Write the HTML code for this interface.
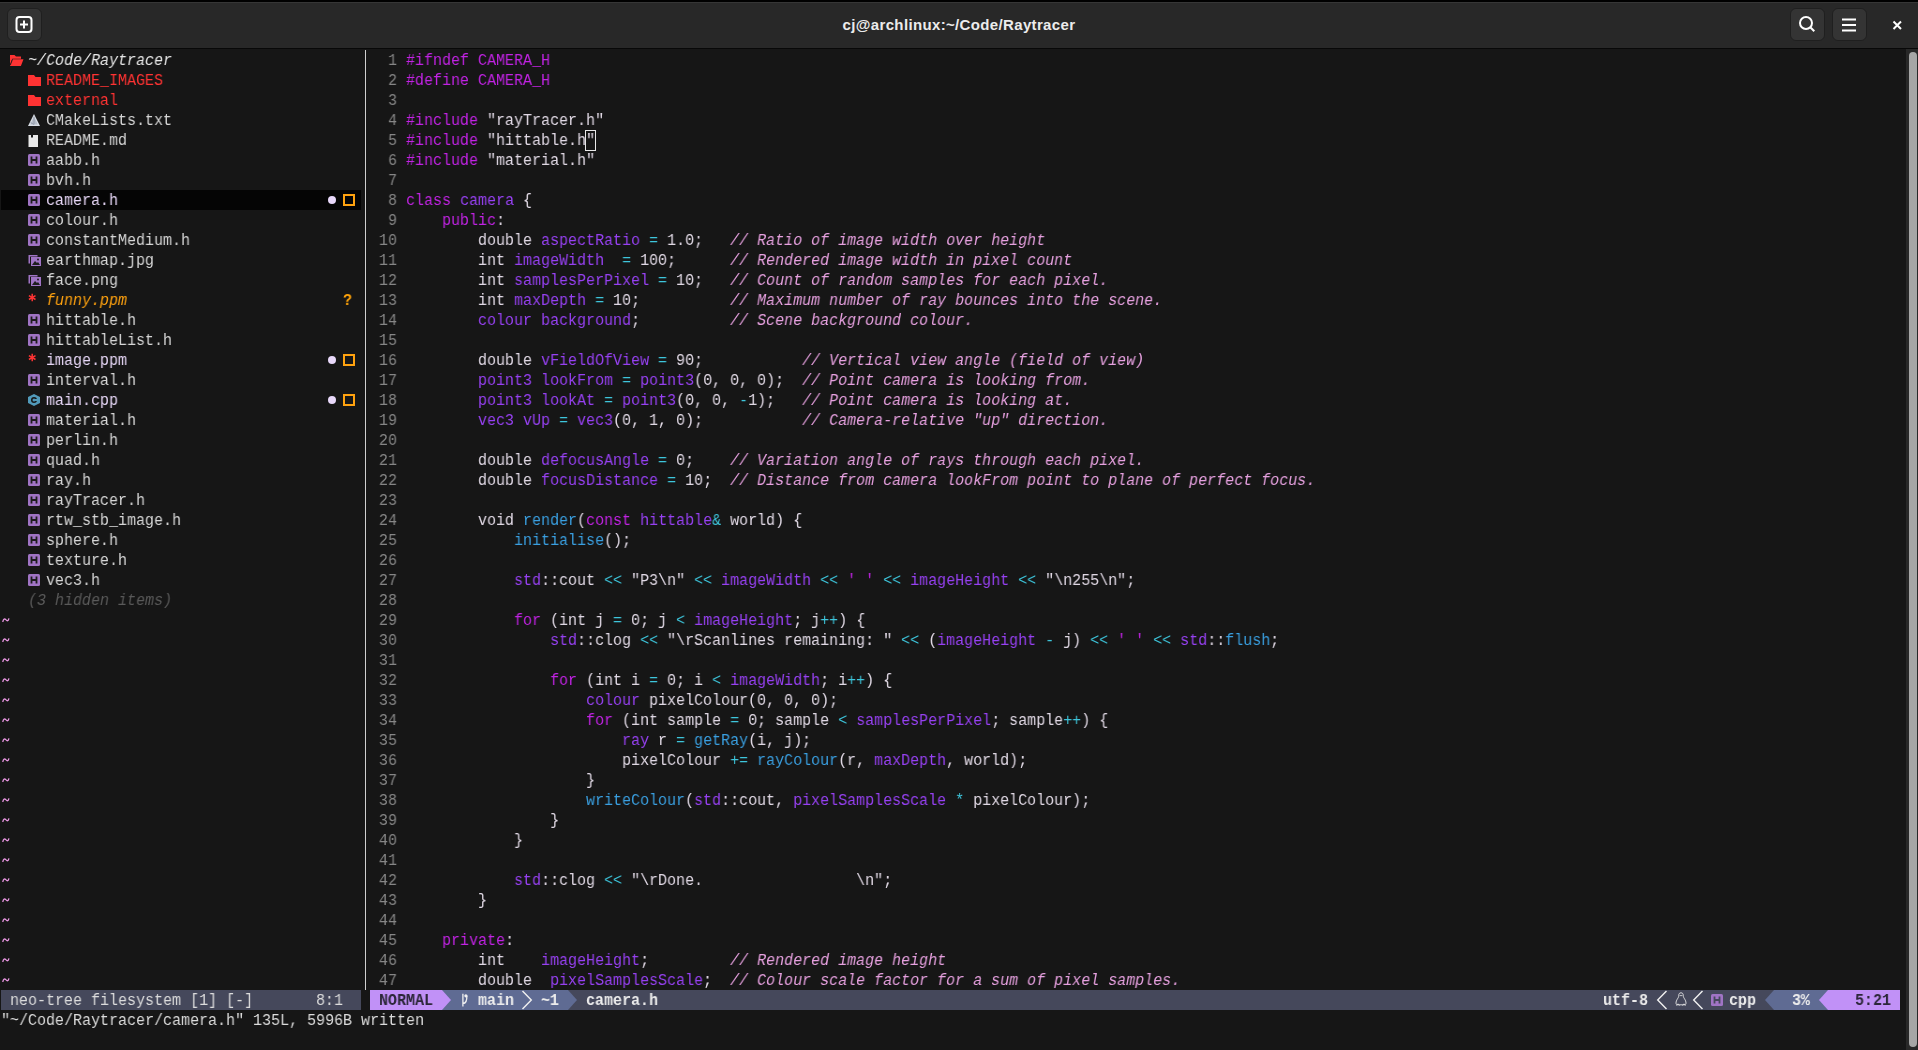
<!DOCTYPE html>
<html><head><meta charset="utf-8"><style>
*{margin:0;padding:0;box-sizing:border-box}
html,body{width:1918px;height:1050px;overflow:hidden;background:#161616}
body{position:relative;font-family:"Liberation Mono",monospace;font-size:16px;line-height:20px}
.t{position:absolute;white-space:pre;height:20px;transform:scaleX(0.9375);transform-origin:0 0;margin-top:1px;will-change:transform;color:#e0d8e4}
.ic{position:absolute;overflow:visible}
.bar{position:absolute;height:20px}
.ln{color:#868686}
.k{color:#c223e4} .i{color:#9741f2} .f{color:#3a9fe0} .o{color:#3ec6dc}
.c{color:#e7a1e0;font-style:italic} .s{color:#c223e4}
.root{color:#e8e8e8;font-style:italic}
.red{color:#ff3333} .tr{color:#d6d6d6} .trl{color:#e6d6f6}
.orgi{color:#ffa20f;font-style:italic} .hid{color:#5a5a5a;font-style:italic}
.tl{color:#e06bd0} .cmd{color:#dcdcdc}
.sl{color:#dcdcdc} .sn{color:#2b2638;font-weight:bold} .sw{color:#ececec;font-weight:bold} .b{font-weight:bold}
.dot{position:absolute;width:8px;height:8px;border-radius:50%;background:#e8d8fa}
.box{position:absolute;width:12px;height:12px;border:2px solid #ffa20f}
#hdr{position:absolute;left:0;top:0;width:1918px;height:49px;background:#282828;border-top:2px solid #000;border-bottom:1px solid #080808;box-shadow:inset 0 1px 0 #363636}
#hdr .title{position:absolute;left:0;width:1918px;top:13px;text-align:center;font:bold 15px/20px "Liberation Sans",sans-serif;letter-spacing:0.35px;color:#ececec}
.hb{position:absolute;top:6px;width:35px;height:33px;border-radius:6px;background:#343434;border:1px solid #1f1f1f}
#sep{position:absolute;left:365px;top:50px;width:1px;height:940px;background:#cfcfcf}
#selrow{position:absolute;left:1px;top:190px;width:360px;height:20px;background:#050505}
#cursor{position:absolute;left:585px;top:130px;width:11px;height:21px;border:1.5px solid #e8e8e8}
#sb{position:absolute;left:1906px;top:49px;width:12px;height:1001px;background:#282828}
#sbt{position:absolute;left:1909px;top:52px;width:8px;height:995px;border-radius:4px;background:#a6a6a6}
</style></head><body>
<div id="hdr">
<div class="hb" style="left:7px"><svg width="34" height="32" viewBox="0 0 34 32" style="position:absolute;left:-1px;top:-1px"><rect x="9.5" y="9" width="15" height="15" rx="3" fill="none" stroke="#fff" stroke-width="2"/><path d="M17 12.5v8M13 16.5h8" stroke="#fff" stroke-width="2"/></svg></div>
<div class="title">cj@archlinux:~/Code/Raytracer</div>
<div class="hb" style="left:1790px"><svg width="34" height="32" viewBox="0 0 34 32" style="position:absolute;left:-1px;top:-1px"><circle cx="16" cy="15" r="6" fill="none" stroke="#fff" stroke-width="2"/><path d="M20.3 19.3l4 4" stroke="#fff" stroke-width="2"/></svg></div>
<div class="hb" style="left:1832px"><svg width="34" height="32" viewBox="0 0 34 32" style="position:absolute;left:-1px;top:-1px"><path d="M10 11.5h14M10 17h14M10 22.5h14" stroke="#fff" stroke-width="2"/></svg></div>
<svg width="14" height="14" viewBox="0 0 14 14" style="position:absolute;left:1890px;top:16px"><path d="M3.5 3.5l7.5 7.5M11 3.5l-7.5 7.5" stroke="#fff" stroke-width="2"/></svg>
</div>
<div id="selrow"></div>
<div id="sep"></div>
<div id="sb"></div><div id="sbt"></div>
<div class="bar" style="left:1px;top:990px;width:360px;background:#45485b"></div>
<div class="t sl" style="left:10px;top:990px">neo-tree filesystem [1] [-]</div>
<div class="t sl" style="left:316px;top:990px">8:1</div>
<div class="bar" style="left:370px;top:990px;width:1530px;background:#45485b"></div>
<div class="bar" style="left:370px;top:990px;width:72px;background:#c191f7"></div>
<svg class="ic" style="left:442px;top:990px" width="9" height="20"><path d="M0 0h0l9 10l-9 10z" fill="#c191f7"/></svg>
<div class="bar" style="left:442px;top:990px;width:126px;background:#5f6b93"></div>
<svg class="ic" style="left:442px;top:990px" width="9" height="20"><path d="M0 0l9 10l-9 10z" fill="#c191f7"/></svg>
<svg class="ic" style="left:568px;top:990px" width="9" height="20"><path d="M0 0l9 10l-9 10z" fill="#5f6b93"/></svg>
<div class="t sn" style="left:379px;top:990px">NORMAL</div>
<svg class="ic" style="left:460px;top:990px" width="9" height="20" viewBox="0 0 9 20"><path d="M2.9 3.7v12.8M2.9 13.5c3 0 4-2.5 4-7.7" fill="none" stroke="#f0f0f0" stroke-width="1.3"/><circle cx="5.9" cy="5.8" r="1.6" fill="#f0f0f0"/></svg>
<div class="t sw" style="left:478px;top:990px">main</div>
<svg class="ic" style="left:523px;top:990px" width="10" height="20"><path d="M-0.5 1l8.8 9l-8.8 9" fill="none" stroke="#f0f0f0" stroke-width="1.4"/></svg>
<div class="t sw" style="left:541px;top:990px">~1</div>
<div class="t sw b" style="left:586px;top:990px">camera.h</div>
<div class="t sw" style="left:1603px;top:990px">utf-8</div>
<svg class="ic" style="left:1657px;top:990px" width="10" height="20"><path d="M9.5 1l-8.8 9l8.8 9" fill="none" stroke="#f0f0f0" stroke-width="1.4"/></svg>
<svg class="ic" style="left:1693px;top:990px" width="10" height="20"><path d="M9.5 1l-8.8 9l8.8 9" fill="none" stroke="#f0f0f0" stroke-width="1.4"/></svg>
<svg class="ic" style="left:1675px;top:990px" width="12" height="20" viewBox="0 0 12 20"><path d="M6 2.8c-1.6 0-2.3 1.2-2.3 2.8c0 1.2-.3 1.8-1.2 3.2C1.6 10.2 1 11.6 1 13.2c0 .8.3 1.3.8 1.6h8.4c.5-.3.8-.8.8-1.6c0-1.6-.6-3-1.5-4.4C8.6 7.4 8.3 6.800 8.300 5.600C8.300 4 7.600 2.800 6 2.800z" fill="none" stroke="#e6e6e6" stroke-width="0.9"/><path d="M4.600 5.600h2.800M1.500 15.600l1.500-1.800l1.500 1.800M7.500 15.600l1.500-1.800l1.500 1.800" fill="none" stroke="#e6e6e6" stroke-width="0.8"/></svg>
<svg class="ic" style="left:1711px;top:990px" width="12" height="20" viewBox="0 0 12 20"><rect x="0" y="4" width="12" height="12" rx="1.5" fill="#a074c4"/><path d="M3.5 6.5v7M8.5 6.5v7M3.5 10h5" stroke="#45485b" stroke-width="1.8"/></svg>
<div class="t sw" style="left:1729px;top:990px">cpp</div>
<div class="bar" style="left:1774px;top:990px;width:126px;background:#5f6b93"></div>
<svg class="ic" style="left:1765px;top:990px" width="9" height="20"><path d="M9 0L0 10l9 10z" fill="#5f6b93"/></svg>
<div class="bar" style="left:1828px;top:990px;width:72px;background:#c191f7"></div>
<svg class="ic" style="left:1819px;top:990px" width="9" height="20"><path d="M9 0L0 10l9 10z" fill="#c191f7"/></svg>
<div class="t sw" style="left:1792px;top:990px">3%</div>
<div class="t sn" style="left:1855px;top:990px">5:21</div>
<svg class="ic" style="left:10px;top:55px" width="14" height="12" viewBox="0 0 14 12"><path d="M0 0h4.5l1.5 1.5h5v2.3H2.3L0 9.5z" fill="#ff3333"/><path d="M2.6 4.3h10.9l-2.6 6.7H0z" fill="#ff3333"/><path d="M2.4 4.6L0.4 10" stroke="#1a1a1a" stroke-width="0.7"/></svg>
<svg class="ic" style="left:28px;top:70px" width="14" height="20" viewBox="0 0 14 20"><path d="M0 5h6l1.5 2H13v9H0z" fill="#ff3333"/></svg>
<svg class="ic" style="left:28px;top:90px" width="14" height="20" viewBox="0 0 14 20"><path d="M0 5h6l1.5 2H13v9H0z" fill="#ff3333"/></svg>
<svg class="ic" style="left:28px;top:110px" width="12" height="20" viewBox="0 0 12 20"><path d="M6 4L0 16h12z" fill="#d9dee6"/><path d="M6 6.5L2.2 14.5h7.6z" fill="#b5bcc8"/><path d="M6 6.5v8M6 14.5l-3.5-2" stroke="#8d96a3" stroke-width="0.8"/></svg>
<svg class="ic" style="left:28px;top:130px" width="12" height="20" viewBox="0 0 12 20"><path d="M0.5 5h9.5v12H0.5z" fill="#e8e8e8"/><path d="M3 5v3l1-1l1 1V5z" fill="#161616"/></svg>
<svg class="ic" style="left:28px;top:150px" width="12" height="20" viewBox="0 0 12 20"><rect x="0" y="4" width="12" height="12" rx="1.5" fill="#a074c4"/><path d="M3.5 6.5v7M8.5 6.5v7M3.5 10h5" stroke="#1d1d1d" stroke-width="1.8"/></svg>
<svg class="ic" style="left:28px;top:170px" width="12" height="20" viewBox="0 0 12 20"><rect x="0" y="4" width="12" height="12" rx="1.5" fill="#a074c4"/><path d="M3.5 6.5v7M8.5 6.5v7M3.5 10h5" stroke="#1d1d1d" stroke-width="1.8"/></svg>
<svg class="ic" style="left:28px;top:190px" width="12" height="20" viewBox="0 0 12 20"><rect x="0" y="4" width="12" height="12" rx="1.5" fill="#a074c4"/><path d="M3.5 6.5v7M8.5 6.5v7M3.5 10h5" stroke="#1d1d1d" stroke-width="1.8"/></svg>
<svg class="ic" style="left:28px;top:210px" width="12" height="20" viewBox="0 0 12 20"><rect x="0" y="4" width="12" height="12" rx="1.5" fill="#a074c4"/><path d="M3.5 6.5v7M8.5 6.5v7M3.5 10h5" stroke="#1d1d1d" stroke-width="1.8"/></svg>
<svg class="ic" style="left:28px;top:230px" width="12" height="20" viewBox="0 0 12 20"><rect x="0" y="4" width="12" height="12" rx="1.5" fill="#a074c4"/><path d="M3.5 6.5v7M8.5 6.5v7M3.5 10h5" stroke="#1d1d1d" stroke-width="1.8"/></svg>
<svg class="ic" style="left:28px;top:250px" width="14" height="20" viewBox="0 0 14 20"><path d="M0.5 5h9v1.5H2v7H0.5z" fill="#a074c4"/><rect x="3" y="7" width="10" height="9" fill="#a074c4"/><path d="M4 15l3-4 2 2 1-1 2 3z" fill="#1d1d1d"/><circle cx="10" cy="9.5" r="1" fill="#1d1d1d"/></svg>
<svg class="ic" style="left:28px;top:270px" width="14" height="20" viewBox="0 0 14 20"><path d="M0.5 5h9v1.5H2v7H0.5z" fill="#a074c4"/><rect x="3" y="7" width="10" height="9" fill="#a074c4"/><path d="M4 15l3-4 2 2 1-1 2 3z" fill="#1d1d1d"/><circle cx="10" cy="9.5" r="1" fill="#1d1d1d"/></svg>
<svg class="ic" style="left:28px;top:290px" width="9" height="20" viewBox="0 0 9 20"><path d="M4.2 3.8v7.4M0.9 5.7l6.6 3.8M7.5 5.7l-6.6 3.8" stroke="#ff3333" stroke-width="1.5"/></svg>
<svg class="ic" style="left:28px;top:310px" width="12" height="20" viewBox="0 0 12 20"><rect x="0" y="4" width="12" height="12" rx="1.5" fill="#a074c4"/><path d="M3.5 6.5v7M8.5 6.5v7M3.5 10h5" stroke="#1d1d1d" stroke-width="1.8"/></svg>
<svg class="ic" style="left:28px;top:330px" width="12" height="20" viewBox="0 0 12 20"><rect x="0" y="4" width="12" height="12" rx="1.5" fill="#a074c4"/><path d="M3.5 6.5v7M8.5 6.5v7M3.5 10h5" stroke="#1d1d1d" stroke-width="1.8"/></svg>
<svg class="ic" style="left:28px;top:350px" width="9" height="20" viewBox="0 0 9 20"><path d="M4.2 3.8v7.4M0.9 5.7l6.6 3.8M7.5 5.7l-6.6 3.8" stroke="#ff3333" stroke-width="1.5"/></svg>
<svg class="ic" style="left:28px;top:370px" width="12" height="20" viewBox="0 0 12 20"><rect x="0" y="4" width="12" height="12" rx="1.5" fill="#a074c4"/><path d="M3.5 6.5v7M8.5 6.5v7M3.5 10h5" stroke="#1d1d1d" stroke-width="1.8"/></svg>
<svg class="ic" style="left:28px;top:390px" width="12" height="20" viewBox="0 0 12 20"><path d="M6 4l6 3v6l-6 3l-6-3V7z" fill="#519aba"/><circle cx="6" cy="10" r="3" fill="#161616"/><circle cx="6" cy="10" r="1.5" fill="#519aba"/><rect x="7" y="9" width="5" height="2" fill="#519aba"/></svg>
<svg class="ic" style="left:28px;top:410px" width="12" height="20" viewBox="0 0 12 20"><rect x="0" y="4" width="12" height="12" rx="1.5" fill="#a074c4"/><path d="M3.5 6.5v7M8.5 6.5v7M3.5 10h5" stroke="#1d1d1d" stroke-width="1.8"/></svg>
<svg class="ic" style="left:28px;top:430px" width="12" height="20" viewBox="0 0 12 20"><rect x="0" y="4" width="12" height="12" rx="1.5" fill="#a074c4"/><path d="M3.5 6.5v7M8.5 6.5v7M3.5 10h5" stroke="#1d1d1d" stroke-width="1.8"/></svg>
<svg class="ic" style="left:28px;top:450px" width="12" height="20" viewBox="0 0 12 20"><rect x="0" y="4" width="12" height="12" rx="1.5" fill="#a074c4"/><path d="M3.5 6.5v7M8.5 6.5v7M3.5 10h5" stroke="#1d1d1d" stroke-width="1.8"/></svg>
<svg class="ic" style="left:28px;top:470px" width="12" height="20" viewBox="0 0 12 20"><rect x="0" y="4" width="12" height="12" rx="1.5" fill="#a074c4"/><path d="M3.5 6.5v7M8.5 6.5v7M3.5 10h5" stroke="#1d1d1d" stroke-width="1.8"/></svg>
<svg class="ic" style="left:28px;top:490px" width="12" height="20" viewBox="0 0 12 20"><rect x="0" y="4" width="12" height="12" rx="1.5" fill="#a074c4"/><path d="M3.5 6.5v7M8.5 6.5v7M3.5 10h5" stroke="#1d1d1d" stroke-width="1.8"/></svg>
<svg class="ic" style="left:28px;top:510px" width="12" height="20" viewBox="0 0 12 20"><rect x="0" y="4" width="12" height="12" rx="1.5" fill="#a074c4"/><path d="M3.5 6.5v7M8.5 6.5v7M3.5 10h5" stroke="#1d1d1d" stroke-width="1.8"/></svg>
<svg class="ic" style="left:28px;top:530px" width="12" height="20" viewBox="0 0 12 20"><rect x="0" y="4" width="12" height="12" rx="1.5" fill="#a074c4"/><path d="M3.5 6.5v7M8.5 6.5v7M3.5 10h5" stroke="#1d1d1d" stroke-width="1.8"/></svg>
<svg class="ic" style="left:28px;top:550px" width="12" height="20" viewBox="0 0 12 20"><rect x="0" y="4" width="12" height="12" rx="1.5" fill="#a074c4"/><path d="M3.5 6.5v7M8.5 6.5v7M3.5 10h5" stroke="#1d1d1d" stroke-width="1.8"/></svg>
<svg class="ic" style="left:28px;top:570px" width="12" height="20" viewBox="0 0 12 20"><rect x="0" y="4" width="12" height="12" rx="1.5" fill="#a074c4"/><path d="M3.5 6.5v7M8.5 6.5v7M3.5 10h5" stroke="#1d1d1d" stroke-width="1.8"/></svg>
<svg class="ic" style="left:1px;top:610px" width="10" height="20" viewBox="0 0 10 20"><path d="M1.8 12c.4-2.6 1.6-3.9 3-2.4c1.4 1.7 2.6 1.7 3.1-1.2" fill="none" stroke="#eb98e4" stroke-width="1.3"/></svg>
<svg class="ic" style="left:1px;top:630px" width="10" height="20" viewBox="0 0 10 20"><path d="M1.8 12c.4-2.6 1.6-3.9 3-2.4c1.4 1.7 2.6 1.7 3.1-1.2" fill="none" stroke="#eb98e4" stroke-width="1.3"/></svg>
<svg class="ic" style="left:1px;top:650px" width="10" height="20" viewBox="0 0 10 20"><path d="M1.8 12c.4-2.6 1.6-3.9 3-2.4c1.4 1.7 2.6 1.7 3.1-1.2" fill="none" stroke="#eb98e4" stroke-width="1.3"/></svg>
<svg class="ic" style="left:1px;top:670px" width="10" height="20" viewBox="0 0 10 20"><path d="M1.8 12c.4-2.6 1.6-3.9 3-2.4c1.4 1.7 2.6 1.7 3.1-1.2" fill="none" stroke="#eb98e4" stroke-width="1.3"/></svg>
<svg class="ic" style="left:1px;top:690px" width="10" height="20" viewBox="0 0 10 20"><path d="M1.8 12c.4-2.6 1.6-3.9 3-2.4c1.4 1.7 2.6 1.7 3.1-1.2" fill="none" stroke="#eb98e4" stroke-width="1.3"/></svg>
<svg class="ic" style="left:1px;top:710px" width="10" height="20" viewBox="0 0 10 20"><path d="M1.8 12c.4-2.6 1.6-3.9 3-2.4c1.4 1.7 2.6 1.7 3.1-1.2" fill="none" stroke="#eb98e4" stroke-width="1.3"/></svg>
<svg class="ic" style="left:1px;top:730px" width="10" height="20" viewBox="0 0 10 20"><path d="M1.8 12c.4-2.6 1.6-3.9 3-2.4c1.4 1.7 2.6 1.7 3.1-1.2" fill="none" stroke="#eb98e4" stroke-width="1.3"/></svg>
<svg class="ic" style="left:1px;top:750px" width="10" height="20" viewBox="0 0 10 20"><path d="M1.8 12c.4-2.6 1.6-3.9 3-2.4c1.4 1.7 2.6 1.7 3.1-1.2" fill="none" stroke="#eb98e4" stroke-width="1.3"/></svg>
<svg class="ic" style="left:1px;top:770px" width="10" height="20" viewBox="0 0 10 20"><path d="M1.8 12c.4-2.6 1.6-3.9 3-2.4c1.4 1.7 2.6 1.7 3.1-1.2" fill="none" stroke="#eb98e4" stroke-width="1.3"/></svg>
<svg class="ic" style="left:1px;top:790px" width="10" height="20" viewBox="0 0 10 20"><path d="M1.8 12c.4-2.6 1.6-3.9 3-2.4c1.4 1.7 2.6 1.7 3.1-1.2" fill="none" stroke="#eb98e4" stroke-width="1.3"/></svg>
<svg class="ic" style="left:1px;top:810px" width="10" height="20" viewBox="0 0 10 20"><path d="M1.8 12c.4-2.6 1.6-3.9 3-2.4c1.4 1.7 2.6 1.7 3.1-1.2" fill="none" stroke="#eb98e4" stroke-width="1.3"/></svg>
<svg class="ic" style="left:1px;top:830px" width="10" height="20" viewBox="0 0 10 20"><path d="M1.8 12c.4-2.6 1.6-3.9 3-2.4c1.4 1.7 2.6 1.7 3.1-1.2" fill="none" stroke="#eb98e4" stroke-width="1.3"/></svg>
<svg class="ic" style="left:1px;top:850px" width="10" height="20" viewBox="0 0 10 20"><path d="M1.8 12c.4-2.6 1.6-3.9 3-2.4c1.4 1.7 2.6 1.7 3.1-1.2" fill="none" stroke="#eb98e4" stroke-width="1.3"/></svg>
<svg class="ic" style="left:1px;top:870px" width="10" height="20" viewBox="0 0 10 20"><path d="M1.8 12c.4-2.6 1.6-3.9 3-2.4c1.4 1.7 2.6 1.7 3.1-1.2" fill="none" stroke="#eb98e4" stroke-width="1.3"/></svg>
<svg class="ic" style="left:1px;top:890px" width="10" height="20" viewBox="0 0 10 20"><path d="M1.8 12c.4-2.6 1.6-3.9 3-2.4c1.4 1.7 2.6 1.7 3.1-1.2" fill="none" stroke="#eb98e4" stroke-width="1.3"/></svg>
<svg class="ic" style="left:1px;top:910px" width="10" height="20" viewBox="0 0 10 20"><path d="M1.8 12c.4-2.6 1.6-3.9 3-2.4c1.4 1.7 2.6 1.7 3.1-1.2" fill="none" stroke="#eb98e4" stroke-width="1.3"/></svg>
<svg class="ic" style="left:1px;top:930px" width="10" height="20" viewBox="0 0 10 20"><path d="M1.8 12c.4-2.6 1.6-3.9 3-2.4c1.4 1.7 2.6 1.7 3.1-1.2" fill="none" stroke="#eb98e4" stroke-width="1.3"/></svg>
<svg class="ic" style="left:1px;top:950px" width="10" height="20" viewBox="0 0 10 20"><path d="M1.8 12c.4-2.6 1.6-3.9 3-2.4c1.4 1.7 2.6 1.7 3.1-1.2" fill="none" stroke="#eb98e4" stroke-width="1.3"/></svg>
<svg class="ic" style="left:1px;top:970px" width="10" height="20" viewBox="0 0 10 20"><path d="M1.8 12c.4-2.6 1.6-3.9 3-2.4c1.4 1.7 2.6 1.7 3.1-1.2" fill="none" stroke="#eb98e4" stroke-width="1.3"/></svg>
<div class="dot" style="left:328px;top:196px"></div>
<div class="box" style="left:343px;top:194px"></div>
<div class="dot" style="left:328px;top:356px"></div>
<div class="box" style="left:343px;top:354px"></div>
<div class="dot" style="left:328px;top:396px"></div>
<div class="box" style="left:343px;top:394px"></div>
<div class="t" style="left:343px;top:290px;color:#ffa30a;font-weight:bold">?</div>
<div id="cursor"></div>
<div class="t" style="left:370px;top:50px"><span class="ln">  1</span></div>
<div class="t" style="left:406px;top:50px"><span class="k">#ifndef CAMERA_H</span></div>
<div class="t" style="left:370px;top:70px"><span class="ln">  2</span></div>
<div class="t" style="left:406px;top:70px"><span class="k">#define CAMERA_H</span></div>
<div class="t" style="left:370px;top:90px"><span class="ln">  3</span></div>
<div class="t" style="left:370px;top:110px"><span class="ln">  4</span></div>
<div class="t" style="left:406px;top:110px"><span class="k">#include</span> "rayTracer.h"</div>
<div class="t" style="left:370px;top:130px"><span class="ln">  5</span></div>
<div class="t" style="left:406px;top:130px"><span class="k">#include</span> "hittable.h"</div>
<div class="t" style="left:370px;top:150px"><span class="ln">  6</span></div>
<div class="t" style="left:406px;top:150px"><span class="k">#include</span> "material.h"</div>
<div class="t" style="left:370px;top:170px"><span class="ln">  7</span></div>
<div class="t" style="left:370px;top:190px"><span class="ln">  8</span></div>
<div class="t" style="left:406px;top:190px"><span class="k">class</span> <span class="i">camera</span> {</div>
<div class="t" style="left:370px;top:210px"><span class="ln">  9</span></div>
<div class="t" style="left:406px;top:210px">    <span class="k">public</span>:</div>
<div class="t" style="left:370px;top:230px"><span class="ln"> 10</span></div>
<div class="t" style="left:406px;top:230px">        double <span class="i">aspectRatio</span> <span class="o">=</span> 1.0;   <span class="c">// Ratio of image width over height</span></div>
<div class="t" style="left:370px;top:250px"><span class="ln"> 11</span></div>
<div class="t" style="left:406px;top:250px">        int <span class="i">imageWidth</span>  <span class="o">=</span> 100;      <span class="c">// Rendered image width in pixel count</span></div>
<div class="t" style="left:370px;top:270px"><span class="ln"> 12</span></div>
<div class="t" style="left:406px;top:270px">        int <span class="i">samplesPerPixel</span> <span class="o">=</span> 10;   <span class="c">// Count of random samples for each pixel.</span></div>
<div class="t" style="left:370px;top:290px"><span class="ln"> 13</span></div>
<div class="t" style="left:406px;top:290px">        int <span class="i">maxDepth</span> <span class="o">=</span> 10;          <span class="c">// Maximum number of ray bounces into the scene.</span></div>
<div class="t" style="left:370px;top:310px"><span class="ln"> 14</span></div>
<div class="t" style="left:406px;top:310px">        <span class="i">colour background</span>;          <span class="c">// Scene background colour.</span></div>
<div class="t" style="left:370px;top:330px"><span class="ln"> 15</span></div>
<div class="t" style="left:370px;top:350px"><span class="ln"> 16</span></div>
<div class="t" style="left:406px;top:350px">        double <span class="i">vFieldOfView</span> <span class="o">=</span> 90;           <span class="c">// Vertical view angle (field of view)</span></div>
<div class="t" style="left:370px;top:370px"><span class="ln"> 17</span></div>
<div class="t" style="left:406px;top:370px">        <span class="i">point3 lookFrom</span> <span class="o">=</span> <span class="i">point3</span>(0, 0, 0);  <span class="c">// Point camera is looking from.</span></div>
<div class="t" style="left:370px;top:390px"><span class="ln"> 18</span></div>
<div class="t" style="left:406px;top:390px">        <span class="i">point3 lookAt</span> <span class="o">=</span> <span class="i">point3</span>(0, 0, <span class="o">-</span>1);   <span class="c">// Point camera is looking at.</span></div>
<div class="t" style="left:370px;top:410px"><span class="ln"> 19</span></div>
<div class="t" style="left:406px;top:410px">        <span class="i">vec3 vUp</span> <span class="o">=</span> <span class="i">vec3</span>(0, 1, 0);           <span class="c">// Camera-relative "up" direction.</span></div>
<div class="t" style="left:370px;top:430px"><span class="ln"> 20</span></div>
<div class="t" style="left:370px;top:450px"><span class="ln"> 21</span></div>
<div class="t" style="left:406px;top:450px">        double <span class="i">defocusAngle</span> <span class="o">=</span> 0;    <span class="c">// Variation angle of rays through each pixel.</span></div>
<div class="t" style="left:370px;top:470px"><span class="ln"> 22</span></div>
<div class="t" style="left:406px;top:470px">        double <span class="i">focusDistance</span> <span class="o">=</span> 10;  <span class="c">// Distance from camera lookFrom point to plane of perfect focus.</span></div>
<div class="t" style="left:370px;top:490px"><span class="ln"> 23</span></div>
<div class="t" style="left:370px;top:510px"><span class="ln"> 24</span></div>
<div class="t" style="left:406px;top:510px">        void <span class="f">render</span>(<span class="k">const</span> <span class="i">hittable</span><span class="o">&amp;</span> world) {</div>
<div class="t" style="left:370px;top:530px"><span class="ln"> 25</span></div>
<div class="t" style="left:406px;top:530px">            <span class="f">initialise</span>();</div>
<div class="t" style="left:370px;top:550px"><span class="ln"> 26</span></div>
<div class="t" style="left:370px;top:570px"><span class="ln"> 27</span></div>
<div class="t" style="left:406px;top:570px">            <span class="i">std</span>::cout <span class="o">&lt;&lt;</span> "P3\n" <span class="o">&lt;&lt;</span> <span class="i">imageWidth</span> <span class="o">&lt;&lt;</span> <span class="s">' '</span> <span class="o">&lt;&lt;</span> <span class="i">imageHeight</span> <span class="o">&lt;&lt;</span> "\n255\n";</div>
<div class="t" style="left:370px;top:590px"><span class="ln"> 28</span></div>
<div class="t" style="left:370px;top:610px"><span class="ln"> 29</span></div>
<div class="t" style="left:406px;top:610px">            <span class="k">for</span> (int j <span class="o">=</span> 0; j <span class="o">&lt;</span> <span class="i">imageHeight</span>; j<span class="o">++</span>) {</div>
<div class="t" style="left:370px;top:630px"><span class="ln"> 30</span></div>
<div class="t" style="left:406px;top:630px">                <span class="i">std</span>::clog <span class="o">&lt;&lt;</span> "\rScanlines remaining: " <span class="o">&lt;&lt;</span> (<span class="i">imageHeight</span> <span class="o">-</span> j) <span class="o">&lt;&lt;</span> <span class="s">' '</span> <span class="o">&lt;&lt;</span> <span class="i">std</span>::<span class="f">flush</span>;</div>
<div class="t" style="left:370px;top:650px"><span class="ln"> 31</span></div>
<div class="t" style="left:370px;top:670px"><span class="ln"> 32</span></div>
<div class="t" style="left:406px;top:670px">                <span class="k">for</span> (int i <span class="o">=</span> 0; i <span class="o">&lt;</span> <span class="i">imageWidth</span>; i<span class="o">++</span>) {</div>
<div class="t" style="left:370px;top:690px"><span class="ln"> 33</span></div>
<div class="t" style="left:406px;top:690px">                    <span class="i">colour</span> pixelColour(0, 0, 0);</div>
<div class="t" style="left:370px;top:710px"><span class="ln"> 34</span></div>
<div class="t" style="left:406px;top:710px">                    <span class="k">for</span> (int sample <span class="o">=</span> 0; sample <span class="o">&lt;</span> <span class="i">samplesPerPixel</span>; sample<span class="o">++</span>) {</div>
<div class="t" style="left:370px;top:730px"><span class="ln"> 35</span></div>
<div class="t" style="left:406px;top:730px">                        <span class="i">ray</span> r <span class="o">=</span> <span class="f">getRay</span>(i, j);</div>
<div class="t" style="left:370px;top:750px"><span class="ln"> 36</span></div>
<div class="t" style="left:406px;top:750px">                        pixelColour <span class="o">+=</span> <span class="f">rayColour</span>(r, <span class="i">maxDepth</span>, world);</div>
<div class="t" style="left:370px;top:770px"><span class="ln"> 37</span></div>
<div class="t" style="left:406px;top:770px">                    }</div>
<div class="t" style="left:370px;top:790px"><span class="ln"> 38</span></div>
<div class="t" style="left:406px;top:790px">                    <span class="f">writeColour</span>(<span class="i">std</span>::cout, <span class="i">pixelSamplesScale</span> <span class="o">*</span> pixelColour);</div>
<div class="t" style="left:370px;top:810px"><span class="ln"> 39</span></div>
<div class="t" style="left:406px;top:810px">                }</div>
<div class="t" style="left:370px;top:830px"><span class="ln"> 40</span></div>
<div class="t" style="left:406px;top:830px">            }</div>
<div class="t" style="left:370px;top:850px"><span class="ln"> 41</span></div>
<div class="t" style="left:370px;top:870px"><span class="ln"> 42</span></div>
<div class="t" style="left:406px;top:870px">            <span class="i">std</span>::clog <span class="o">&lt;&lt;</span> "\rDone.                 \n";</div>
<div class="t" style="left:370px;top:890px"><span class="ln"> 43</span></div>
<div class="t" style="left:406px;top:890px">        }</div>
<div class="t" style="left:370px;top:910px"><span class="ln"> 44</span></div>
<div class="t" style="left:370px;top:930px"><span class="ln"> 45</span></div>
<div class="t" style="left:406px;top:930px">    <span class="k">private</span>:</div>
<div class="t" style="left:370px;top:950px"><span class="ln"> 46</span></div>
<div class="t" style="left:406px;top:950px">        int    <span class="i">imageHeight</span>;         <span class="c">// Rendered image height</span></div>
<div class="t" style="left:370px;top:970px"><span class="ln"> 47</span></div>
<div class="t" style="left:406px;top:970px">        double  <span class="i">pixelSamplesScale</span>;  <span class="c">// Colour scale factor for a sum of pixel samples.</span></div>
<div class="t" style="left:28px;top:50px"><span class="root">~/Code/Raytracer</span></div>
<div class="t" style="left:46px;top:70px"><span class="red">README_IMAGES</span></div>
<div class="t" style="left:46px;top:90px"><span class="red">external</span></div>
<div class="t" style="left:46px;top:110px"><span class="tr">CMakeLists.txt</span></div>
<div class="t" style="left:46px;top:130px"><span class="tr">README.md</span></div>
<div class="t" style="left:46px;top:150px"><span class="tr">aabb.h</span></div>
<div class="t" style="left:46px;top:170px"><span class="tr">bvh.h</span></div>
<div class="t" style="left:46px;top:190px"><span class="trl">camera.h</span></div>
<div class="t" style="left:46px;top:210px"><span class="tr">colour.h</span></div>
<div class="t" style="left:46px;top:230px"><span class="tr">constantMedium.h</span></div>
<div class="t" style="left:46px;top:250px"><span class="tr">earthmap.jpg</span></div>
<div class="t" style="left:46px;top:270px"><span class="tr">face.png</span></div>
<div class="t" style="left:46px;top:290px"><span class="orgi">funny.ppm</span></div>
<div class="t" style="left:46px;top:310px"><span class="tr">hittable.h</span></div>
<div class="t" style="left:46px;top:330px"><span class="tr">hittableList.h</span></div>
<div class="t" style="left:46px;top:350px"><span class="trl">image.ppm</span></div>
<div class="t" style="left:46px;top:370px"><span class="tr">interval.h</span></div>
<div class="t" style="left:46px;top:390px"><span class="trl">main.cpp</span></div>
<div class="t" style="left:46px;top:410px"><span class="tr">material.h</span></div>
<div class="t" style="left:46px;top:430px"><span class="tr">perlin.h</span></div>
<div class="t" style="left:46px;top:450px"><span class="tr">quad.h</span></div>
<div class="t" style="left:46px;top:470px"><span class="tr">ray.h</span></div>
<div class="t" style="left:46px;top:490px"><span class="tr">rayTracer.h</span></div>
<div class="t" style="left:46px;top:510px"><span class="tr">rtw_stb_image.h</span></div>
<div class="t" style="left:46px;top:530px"><span class="tr">sphere.h</span></div>
<div class="t" style="left:46px;top:550px"><span class="tr">texture.h</span></div>
<div class="t" style="left:46px;top:570px"><span class="tr">vec3.h</span></div>
<div class="t" style="left:28px;top:590px"><span class="hid">(3 hidden items)</span></div>
<div class="t" style="left:1px;top:1010px"><span class="cmd">"~/Code/Raytracer/camera.h" 135L, 5996B written</span></div>
</body></html>
